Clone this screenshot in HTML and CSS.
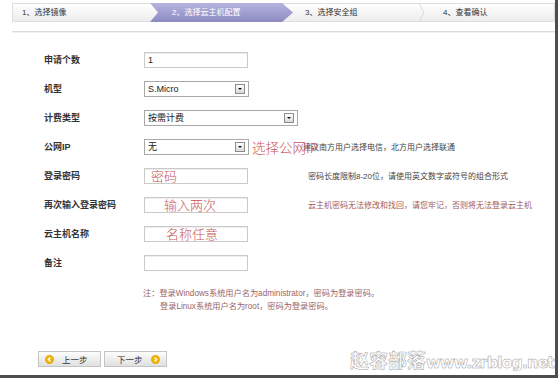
FILE: index.html
```html
<!DOCTYPE html>
<html lang="zh-CN">
<head>
    <meta charset="UTF-8">
    <title>创建云主机 - 选择云主机配置</title>
    <link rel="stylesheet" href="styles.css">
</head>
<body>
<div class="frame">
    <div class="steps">
        <div class="step s1">1、选择镜像</div>
        <div class="step s2">2、选择云主机配置</div>
        <div class="step s3">3、选择安全组</div>
        <div class="step s4">4、查看确认</div>
    </div>
    <div class="rule"></div>

    <div class="form">
        <div class="row">
            <div class="label">申请个数</div>
            <div class="field"><div class="input">1</div></div>
        </div>
        <div class="row">
            <div class="label">机型</div>
            <div class="field"><div class="select">S.Micro<span class="drop"></span></div></div>
        </div>
        <div class="row">
            <div class="label">计费类型</div>
            <div class="field"><div class="select wide">按需计费<span class="drop"></span></div></div>
        </div>
        <div class="row">
            <div class="label">公网IP</div>
            <div class="field">
                <div class="select">无<span class="drop"></span></div>
                <span class="mark pick">选择公网IP</span>
            </div>
            <div class="hint shift">建议南方用户选择电信，北方用户选择联通</div>
        </div>
        <div class="row">
            <div class="label">登录密码</div>
            <div class="field"><div class="input"><span class="mark m1">密码</span></div></div>
            <div class="hint">密码长度限制8-20位，请使用英文数字或符号的组合形式</div>
        </div>
        <div class="row">
            <div class="label">再次输入登录密码</div>
            <div class="field"><div class="input"><span class="mark m2">输入两次</span></div></div>
            <div class="hint warn">云主机密码无法修改和找回，请您牢记，否则将无法登录云主机</div>
        </div>
        <div class="row">
            <div class="label">云主机名称</div>
            <div class="field"><div class="input"><span class="mark m3">名称任意</span></div></div>
        </div>
        <div class="row">
            <div class="label">备注</div>
            <div class="field"><div class="input"></div></div>
        </div>
    </div>

    <div class="tips">
        <div>注：登录Windows系统用户名为administrator，密码为登录密码。</div>
        <div class="indent">登录Linux系统用户名为root，密码为登录密码。</div>
    </div>

    <div class="actions">
        <button class="btn prev">
            <svg width="9" height="9" viewBox="0 0 10 10"><circle cx="5" cy="5" r="4.6" fill="#f3b400" stroke="#d99400" stroke-width="0.6"/><path d="M6 2.8 L3.8 5 L6 7.2" fill="none" stroke="#fff" stroke-width="1.6"/></svg>
            <span>上一步</span>
        </button>
        <button class="btn next">
            <span>下一步</span>
            <svg width="9" height="9" viewBox="0 0 10 10"><circle cx="5" cy="5" r="4.6" fill="#f3b400" stroke="#d99400" stroke-width="0.6"/><path d="M4 2.8 L6.2 5 L4 7.2" fill="none" stroke="#fff" stroke-width="1.6"/></svg>
        </button>
    </div>

    <div class="watermark">赵容部落<span class="latin">www.zrblog.net</span></div>
</div>
</body>
</html>
```

FILE: styles.css
```css
body {
    margin: 0;
    background-color: #ffffff;
    color: #333333;
    font-family: "Liberation Sans", "Noto Sans CJK SC", sans-serif;
}
.frame {
    position: relative;
    width: 558px;
    height: 378px;
    box-sizing: border-box;
    padding: 3px 0 0 12px;
    border-right: 3px solid #4e4e4e;
    border-bottom: 3px solid #4e4e4e;
}

/* step bar */
.steps {
    display: flex;
    height: 19px;
    line-height: 19px;
    font-size: 8px;
    background: linear-gradient(#ffffff, #ececec);
    box-shadow: inset 0 0 0 1px #dedede;
}
.step {
    box-sizing: border-box;
    white-space: nowrap;
}
.s1 {
    width: 138px;
    padding-left: 10px;
}
.s2 {
    width: 143px;
    padding-left: 22px;
    color: #ffffff;
    background: linear-gradient(#b6b4de, #8d8ac2);
    clip-path: polygon(0 0, calc(100% - 11px) 0, 100% 50%, calc(100% - 11px) 100%, 0 100%, 8px 50%);
}
.s3 {
    position: relative;
    width: 135px;
    padding-left: 12px;
}
.s3::after {
    content: "";
    position: absolute;
    right: 2px;
    top: 3px;
    width: 12px;
    height: 12px;
    border-top: 1px solid #d2d2d2;
    border-right: 1px solid #d2d2d2;
    transform: scaleX(0.5) rotate(45deg);
}
.s4 {
    flex: 1;
    padding-left: 15px;
}
.rule {
    margin-top: 9px;
    border-top: 1px solid #dcdcdc;
    border-bottom: 1px solid #f1f1f1;
}

/* form */
.form {
    margin-top: 12px;
    padding-left: 32px;
}
.row {
    display: grid;
    grid-template-columns: 100px 164px auto;
    align-items: center;
    height: 29px;
}
.label {
    font-size: 9px;
    font-weight: bold;
    color: #333333;
    white-space: nowrap;
}
.field {
    display: flex;
    align-items: center;
    white-space: nowrap;
}
.input,
.select {
    position: relative;
    flex-shrink: 0;
    box-sizing: border-box;
    height: 16px;
    line-height: 14px;
    padding-left: 3px;
    font-size: 9px;
    color: #222222;
    background: #ffffff;
}
.input {
    width: 104px;
    border: 1px solid #cacaca;
    box-shadow: inset 0 1px 1px #ededed;
}
.select {
    width: 105px;
    border: 1px solid #a9a9a9;
}
.select.wide {
    width: 154px;
}
.drop {
    position: absolute;
    right: 3px;
    top: 2px;
    width: 8px;
    height: 8px;
    border: 1px solid #8c8c8c;
    background: linear-gradient(#ffffff, #d8d8d8);
}
.drop::after {
    content: "";
    position: absolute;
    left: 2px;
    top: 3px;
    border-left: 2px solid transparent;
    border-right: 2px solid transparent;
    border-top: 2px solid #111111;
}
.mark {
    position: relative;
    z-index: 1;
    flex-shrink: 0;
    font-family: "Noto Sans CJK SC", sans-serif;
    font-size: 13px;
    font-weight: 300;
    line-height: 14px;
    color: #c85656;
}
.pick {
    margin-left: 3px;
    font-size: 13.5px;
}
.m1 {
    margin-left: 3px;
}
.m2 {
    margin-left: 16px;
}
.m3 {
    margin-left: 18px;
}
.hint {
    font-size: 8px;
    color: #444444;
    white-space: nowrap;
}
.hint.shift {
    margin-left: -5px;
}
.hint.warn {
    color: #a25c5c;
}

/* notes */
.tips {
    margin: 10px 0 0 131px;
    font-size: 8.2px;
    line-height: 13px;
    color: #9a6666;
    white-space: nowrap;
}
.tips .indent {
    padding-left: 17px;
}

/* buttons */
.actions {
    display: flex;
    gap: 3px;
    margin: 38px 0 0 26px;
}
.btn {
    display: flex;
    align-items: center;
    gap: 8px;
    box-sizing: border-box;
    width: 63px;
    height: 16px;
    padding: 0;
    border: 1px solid #c4c4c4;
    background: linear-gradient(#fdfdfd, #e0e0e0);
    font-family: "Liberation Sans", "Noto Sans CJK SC", sans-serif;
    font-size: 8.5px;
    color: #333333;
}
.btn.prev {
    padding-left: 6px;
}
.btn.next {
    padding-left: 12px;
}

/* watermark */
.watermark {
    position: absolute;
    right: 1px;
    bottom: 2px;
    font-family: "Noto Sans CJK SC", sans-serif;
    font-size: 19px;
    font-weight: bold;
    line-height: 20px;
    color: #ffffff;
    -webkit-text-stroke: 0.5px #a0a0a0;
    white-space: nowrap;
}
.watermark .latin {
    font-family: "DejaVu Sans", sans-serif;
    font-size: 16px;
    letter-spacing: -1px;
}
```
